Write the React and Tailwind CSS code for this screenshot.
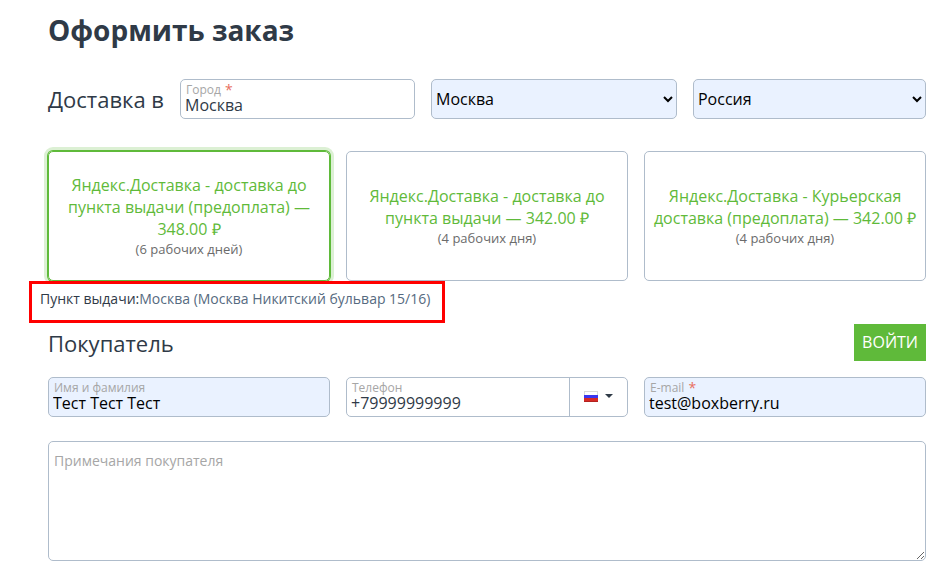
import { useState } from "react";

const deliveries = [
  {
    id: "pickup-prepaid",
    title: "Яндекс.Доставка - доставка до пункта выдачи (предоплата) —",
    price: "348.00\u00a0₽",
    term: "(6 рабочих дней)",
  },
  {
    id: "pickup",
    title: "Яндекс.Доставка - доставка до пункта выдачи —",
    price: "342.00\u00a0₽",
    term: "(4 рабочих дня)",
  },
  {
    id: "courier",
    title: "Яндекс.Доставка - Курьерская доставка (предоплата) —",
    price: "342.00\u00a0₽",
    term: "(4 рабочих дня)",
  },
];

function Field({ id, label, required, filled, type = "text", defaultValue, children }) {
  return (
    <div
      className={`flex h-10 min-w-0 overflow-hidden rounded-[5px] border border-[#afbccb] ${
        filled ? "bg-[#eaf2ff] text-black" : "bg-white"
      }`}
    >
      <div className="flex min-w-0 flex-1 flex-col pt-1">
        <label htmlFor={id} className="flex gap-1 pl-[5px] text-xs leading-3 text-[#a6a6a6]">
          {label}
          {required && <span className="text-sm leading-3 text-[#e8705f]">*</span>}
        </label>
        <input
          id={id}
          type={type}
          defaultValue={defaultValue}
          className="h-[18px] w-full bg-transparent pl-1 text-base leading-[18px] outline-none"
        />
      </div>
      {children}
    </div>
  );
}

function Select({ label, options }) {
  return (
    <select
      aria-label={label}
      className="h-10 w-full min-w-0 rounded-[5px] border border-[#afbccb] bg-[#eaf2ff] text-base text-black"
    >
      {options.map((option) => (
        <option key={option}>{option}</option>
      ))}
    </select>
  );
}

function DeliveryCard({ item, active, onSelect }) {
  return (
    <label
      className={`flex min-h-[130px] cursor-pointer flex-col items-center justify-center rounded-[5px] border px-2 text-center ${
        active
          ? "border-[#5fba3a] shadow-[0_0_0_1px_#5fba3a,0_0_0_4px_#dcf0d4]"
          : "border-[#afbccb]"
      }`}
    >
      <input
        type="radio"
        name="delivery"
        className="sr-only"
        checked={active}
        onChange={() => onSelect(item.id)}
      />
      <span className="text-base leading-[22px] text-[#5fba3a]">
        {`${item.title} ${item.price}`}
      </span>
      <span className="text-[13px] leading-[18px] text-[#6b6b6b]">{item.term}</span>
    </label>
  );
}

function FlagRu() {
  return (
    <svg width="14" height="11" viewBox="0 0 14 11" aria-hidden="true">
      <rect width="14" height="11" fill="#d9d9d9" />
      <rect x="1" y="1" width="12" height="3" fill="#fff" />
      <rect y="4" width="14" height="3" fill="#3a36f0" />
      <rect y="7" width="14" height="4" fill="#d62a26" />
      <rect y="10" width="14" height="1" fill="#b3221f" />
    </svg>
  );
}

function App() {
  const [delivery, setDelivery] = useState("pickup-prepaid");

  return (
    <div className="min-h-screen bg-white pt-2 pr-[26px] pb-6 pl-12 font-['Open_Sans',sans-serif] text-[#2f3a47]">
      <h1 className="text-[28px] leading-[44px] font-bold">Оформить заказ</h1>

      <form onSubmit={(e) => e.preventDefault()}>
        {/* City, region, country */}
        <div className="mt-[27px] flex items-center gap-4">
          <h2 className="text-[22px] leading-10">Доставка в</h2>
          <div className="grid flex-1 grid-cols-[235fr_246fr_233fr] gap-4">
            <Field id="city" label="Город" required defaultValue="Москва" />
            <Select label="Регион" options={["Москва", "Московская область"]} />
            <Select label="Страна" options={["Россия", "Беларусь"]} />
          </div>
        </div>

        {/* Delivery options */}
        <div className="mt-8 grid grid-cols-3 gap-4">
          {deliveries.map((item) => (
            <DeliveryCard
              key={item.id}
              item={item}
              active={delivery === item.id}
              onSelect={setDelivery}
            />
          ))}
        </div>

        <div className="relative -ml-[19px] h-[42px] w-fit border-3 border-[#ff0000] bg-white px-2 pt-[5px] pr-3 text-sm leading-5">
          Пункт выдачи:
          <a href="#pickup" className="text-[#566a80]">
            Москва (Москва Никитский бульвар 15/16)
          </a>
        </div>

        {/* Customer */}
        <div className="mt-px flex items-center justify-between">
          <h2 className="text-[22px] leading-9">Покупатель</h2>
          <button
            type="button"
            className="h-[37px] bg-[#5fba3a] px-2 pb-0.5 text-base text-white uppercase"
          >
            Войти
          </button>
        </div>

        <div className="mt-4 grid grid-cols-3 gap-4">
          <Field id="name" label="Имя и фамилия" filled defaultValue="Тест Тест Тест" />
          <Field id="phone" label="Телефон" type="tel" defaultValue="+79999999999">
            <button
              type="button"
              aria-label="Код страны"
              className="flex w-[58px] items-center justify-center gap-[7px] border-l border-[#afbccb] pb-0.5"
            >
              <FlagRu />
              <svg width="8" height="4" viewBox="0 0 8 4" aria-hidden="true">
                <path d="M0 0h8L4 4z" fill="#2f3a47" />
              </svg>
            </button>
          </Field>
          <Field
            id="email"
            label="E-mail"
            required
            filled
            type="email"
            defaultValue="test@boxberry.ru"
          />
        </div>

        <textarea
          aria-label="Примечания покупателя"
          placeholder="Примечания покупателя"
          className="mt-6 block h-[120px] w-full rounded-[5px] border border-[#afbccb] px-[5px] py-2 text-sm leading-[22px] placeholder:text-[#a6a6a6]"
        />
      </form>
    </div>
  );
}

export default App;
